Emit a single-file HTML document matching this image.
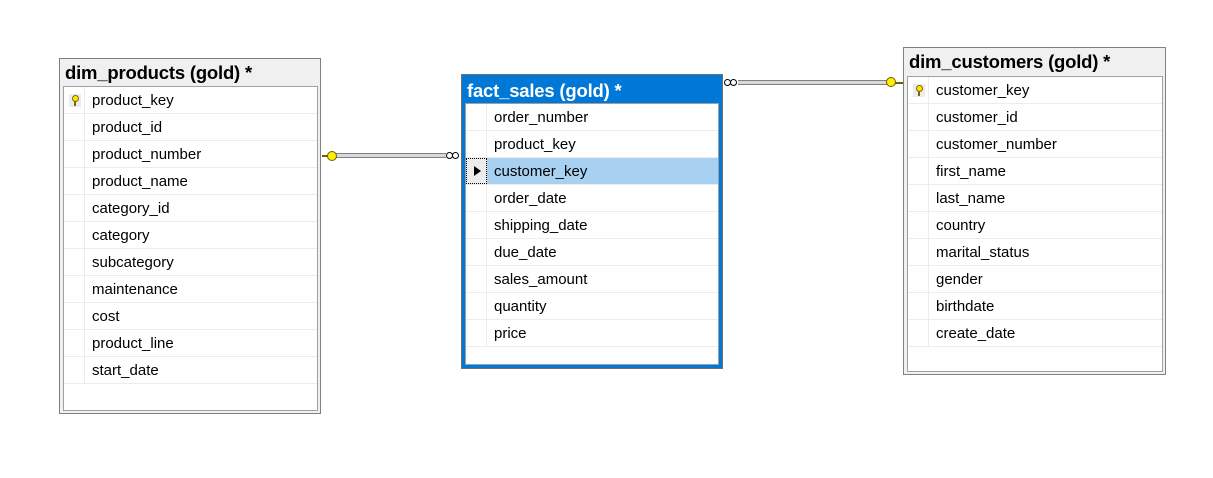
<!DOCTYPE html>
<html><head><style>
body{margin:0;width:1213px;height:478px;background:#fff;position:relative;overflow:hidden;font-family:"Liberation Sans",sans-serif}
.t{position:absolute;border:1px solid #808080;background:#f0f0f0;box-sizing:border-box}
.tt{position:absolute;left:5px;top:3px;font-weight:bold;font-size:18.5px;color:#000;white-space:nowrap;letter-spacing:-0.2px}
.in{position:absolute;left:3px;right:2px;bottom:2px;border:1px solid #a0a0a0;background:#fff;box-sizing:border-box}
.r{height:27px;border-bottom:1px solid #ececec;box-sizing:border-box;position:relative;font-size:15px;line-height:27px;color:#000}
.r .c{position:absolute;left:0;top:0;width:21px;height:26px;border-right:1px solid #ececec;box-sizing:border-box}
.r span{position:absolute;left:28px}
.key{position:absolute;left:5px;top:7px;width:12px;height:13px;background:#ececec}
.key:before{content:"";position:absolute;left:3px;top:1px;width:5px;height:5px;border:1px solid #7a6a00;border-radius:50%;background:#ffe800}
.key:after{content:"";position:absolute;left:5px;top:7px;width:2px;height:5px;background:#7a6a00}
.f{border:1px solid #707070}
.f .blue{position:absolute;inset:0;border:3px solid #0078d7;background:#0078d7}
.f .tt{color:#fff}
.sel{background:#a8d0f0}
.sel .c{background:#ececec;border:1px dotted #000}
.sel .c:after{content:"";position:absolute;left:7px;top:7px;border-left:7px solid #000;border-top:5px solid transparent;border-bottom:5px solid transparent}
.line{position:absolute;height:3px;border-top:1px solid #808080;border-bottom:1px solid #808080;background:#d8d8d8}
.o{position:absolute;width:5px;height:5px;border:1px solid #000;border-radius:50%;background:#fff}
.gk{position:absolute;width:8px;height:8px;border-radius:50%;background:#ffee00;border:1px solid #6b6000}
.gt{position:absolute;height:2px;background:#6b6000}
</style></head><body>

<div class="t" style="left:59px;top:58px;width:262px;height:356px">
<div class="tt">dim_products (gold) *</div>
<div class="in" style="top:27px">
<div class="r"><div class="c"><div class="key"></div></div><span>product_key</span></div>
<div class="r"><div class="c"></div><span>product_id</span></div>
<div class="r"><div class="c"></div><span>product_number</span></div>
<div class="r"><div class="c"></div><span>product_name</span></div>
<div class="r"><div class="c"></div><span>category_id</span></div>
<div class="r"><div class="c"></div><span>category</span></div>
<div class="r"><div class="c"></div><span>subcategory</span></div>
<div class="r"><div class="c"></div><span>maintenance</span></div>
<div class="r"><div class="c"></div><span>cost</span></div>
<div class="r"><div class="c"></div><span>product_line</span></div>
<div class="r"><div class="c"></div><span>start_date</span></div>
</div></div>

<div class="t f" style="left:461px;top:74px;width:262px;height:295px">
<div class="blue"></div>
<div class="tt" style="top:5px">fact_sales (gold) *</div>
<div class="in" style="top:28px;left:3px;right:3px;bottom:3px;border-color:#a0a0a0">
<div class="r"><div class="c"></div><span>order_number</span></div>
<div class="r"><div class="c"></div><span>product_key</span></div>
<div class="r sel"><div class="c"></div><span>customer_key</span></div>
<div class="r"><div class="c"></div><span>order_date</span></div>
<div class="r"><div class="c"></div><span>shipping_date</span></div>
<div class="r"><div class="c"></div><span>due_date</span></div>
<div class="r"><div class="c"></div><span>sales_amount</span></div>
<div class="r"><div class="c"></div><span>quantity</span></div>
<div class="r"><div class="c"></div><span>price</span></div>
</div></div>

<div class="t" style="left:903px;top:47px;width:263px;height:328px">
<div class="tt">dim_customers (gold) *</div>
<div class="in" style="top:28px">
<div class="r"><div class="c"><div class="key"></div></div><span>customer_key</span></div>
<div class="r"><div class="c"></div><span>customer_id</span></div>
<div class="r"><div class="c"></div><span>customer_number</span></div>
<div class="r"><div class="c"></div><span>first_name</span></div>
<div class="r"><div class="c"></div><span>last_name</span></div>
<div class="r"><div class="c"></div><span>country</span></div>
<div class="r"><div class="c"></div><span>marital_status</span></div>
<div class="r"><div class="c"></div><span>gender</span></div>
<div class="r"><div class="c"></div><span>birthdate</span></div>
<div class="r"><div class="c"></div><span>create_date</span></div>
</div></div>

<div class="line" style="left:334px;top:153px;width:112px"></div>
<div class="gt" style="left:322px;top:155px;width:6px"></div>
<div class="gk" style="left:327px;top:151px"></div>
<div class="o" style="left:446px;top:152px"></div>
<div class="o" style="left:452px;top:152px"></div>

<div class="line" style="left:738px;top:80px;width:150px"></div>
<div class="o" style="left:724px;top:79px"></div>
<div class="o" style="left:730px;top:79px"></div>
<div class="gk" style="left:886px;top:77px"></div>
<div class="gt" style="left:895px;top:82px;width:8px"></div>
</body></html>
